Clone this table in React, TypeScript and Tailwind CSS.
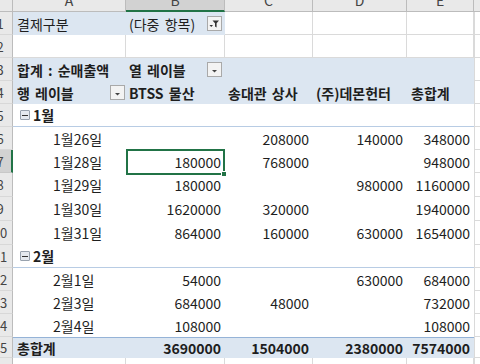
import type { ReactNode } from "react"

const W = ["w-[113px]", "w-[99px]", "w-[88px]", "w-[94px]", "w-[67px]"]
const COLS = ["A", "B", "C", "D", "E"]

function RowHead({ n, sel }: { n: number; sel?: boolean }) {
  return (
    <div
      className={
        sel
          ? "w-[13px] shrink-0 overflow-hidden border-b border-r-2 border-b-[#c8c8c8] border-r-[#217346] bg-[#d2d2d2]"
          : "w-[13px] shrink-0 overflow-hidden border-b border-r border-b-[#d8d8d8] border-r-[#bcbcbc] bg-[#e9e9e9]"
      }
    >
      <div className="-ml-[13px] flex h-full w-[26px] items-center justify-center text-[13px] text-[#444]">
        {n}
      </div>
    </div>
  )
}

function Row({ n, h, sel, children }: { n: number; h: string; sel?: boolean; children: ReactNode }) {
  return (
    <div className={`flex ${h}`}>
      <RowHead n={n} sel={sel} />
      {children}
      <div className="w-[7px] shrink-0 border-b border-l border-[#dadada] bg-white" />
    </div>
  )
}

function DropBtn({ filter }: { filter?: boolean }) {
  return (
    <span className="flex h-[15px] w-[15px] shrink-0 items-center justify-center border border-[#a9a9a9] bg-[#f3f3f3]">
      {filter ? (
        <svg width="11" height="11" viewBox="0 0 11 11">
          <path d="M0.5 7 H4 L2.25 9 Z" fill="#333" />
          <path d="M3.5 2.5 H10 L7.6 5.2 V9.5 L6 8.6 V5.2 Z" fill="#333" />
        </svg>
      ) : (
        <svg width="9" height="9" viewBox="0 0 9 9">
          <path d="M2 5 H7 L4.5 7.5 Z" fill="#444" />
        </svg>
      )}
    </span>
  )
}

function Collapse() {
  return (
    <span className="mr-[3px] flex h-[10px] w-[10px] items-center justify-center rounded-[1px] border border-[#98a2ae] bg-[#e4e9ef]">
      <span className="h-[1px] w-[6px] bg-[#333]" />
    </span>
  )
}

const grid = "shrink-0 border-b border-r border-[#dadada] bg-white"

const days = [
  { n: 6, h: "h-[23px]", label: "1월26일", v: ["", "208000", "140000", "348000"] },
  { n: 7, h: "h-[23px]", label: "1월28일", v: ["180000", "768000", "", "948000"], sel: true },
  { n: 8, h: "h-[24px]", label: "1월29일", v: ["180000", "", "980000", "1160000"] },
  { n: 9, h: "h-[24px]", label: "1월30일", v: ["1620000", "320000", "", "1940000"] },
  { n: 10, h: "h-[24px]", label: "1월31일", v: ["864000", "160000", "630000", "1654000"] },
]

const days2 = [
  { n: 12, h: "h-[23px]", label: "2월1일", v: ["54000", "", "630000", "684000"] },
  { n: 13, h: "h-[23px]", label: "2월3일", v: ["684000", "48000", "", "732000"] },
  { n: 14, h: "h-[23px]", label: "2월4일", v: ["108000", "", "", "108000"] },
]

type Day = { n: number; h: string; label: string; v: string[]; sel?: boolean }

function DayRow({ d }: { d: Day }) {
  return (
    <Row n={d.n} h={d.h} sel={d.sel}>
      <div className={`${W[0]} flex shrink-0 items-center bg-white pl-[40px]`}>{d.label}</div>
      {d.v.map((v, i) => (
        <div
          key={i}
          className={`${W[i + 1]} relative flex shrink-0 items-center justify-end bg-white pr-[4px]`}
        >
          {v}
          {d.sel && i === 0 && (
            <span className="pointer-events-none absolute -bottom-[2px] -top-[1px] left-0 right-0 z-10 border-2 border-[#217346]">
              <span className="absolute -bottom-[4px] -right-[4px] h-[6px] w-[6px] border border-white bg-[#217346]" />
            </span>
          )}
        </div>
      ))}
    </Row>
  )
}

function GroupRow({ n, label }: { n: number; label: string }) {
  return (
    <Row n={n} h="h-[23px]">
      <div className={`${W[0]} flex shrink-0 items-center border-b border-[#b8cce4] bg-white pl-[7px] font-bold`}>
        <Collapse />
        {label}
      </div>
      {[1, 2, 3, 4].map((i) => (
        <div key={i} className={`${W[i]} shrink-0 border-b border-[#b8cce4] bg-white`} />
      ))}
    </Row>
  )
}

export default function App() {
  return (
    <div className="h-[364px] w-[480px] overflow-hidden bg-white font-['Noto_Sans_CJK_KR','Liberation_Sans',sans-serif] text-[14px] leading-none text-[#1e1e1e] [word-spacing:2px]">
      {/* column headers */}
      <div className="flex h-[12px]">
        <div className="w-[13px] shrink-0 border-b border-r border-[#bcbcbc] bg-[#e9e9e9]" />
        {COLS.map((c, i) => (
          <div
            key={c}
            className={
              i === 1
                ? `${W[i]} shrink-0 overflow-hidden border-b-2 border-r border-b-[#217346] border-r-[#bcbcbc] bg-[#d2d2d2]`
                : `${W[i]} shrink-0 overflow-hidden border-b border-r border-[#bcbcbc] bg-[#e9e9e9]`
            }
          >
            <div className="-mt-[10px] flex h-[20px] items-center justify-center text-[14px] text-[#444]">{c}</div>
          </div>
        ))}
        <div className="w-[7px] shrink-0 border-b border-[#bcbcbc] bg-[#e9e9e9]" />
      </div>

      {/* 1: report filter */}
      <Row n={1} h="h-[23px]">
        <div className={`${W[0]} flex shrink-0 items-center bg-[#dce6f1] pl-[4px]`}>결제구분</div>
        <div className={`${W[1]} flex shrink-0 items-center justify-between bg-[#dce6f1] pl-[3px] pr-[3px]`}>
          <span>(다중 항목)</span>
          <DropBtn filter />
        </div>
        <div className={`${W[2]} ${grid}`} />
        <div className={`${W[3]} ${grid}`} />
        <div className={`${W[4]} ${grid}`} />
      </Row>

      {/* 2: empty */}
      <Row n={2} h="h-[23px]">
        {W.map((w) => (
          <div key={w} className={`${w} ${grid}`} />
        ))}
      </Row>

      {/* 3: value / column labels */}
      <Row n={3} h="h-[23px]">
        <div className={`${W[0]} flex shrink-0 items-center bg-[#dce6f1] pl-[4px] font-bold`}>합계 : 순매출액</div>
        <div className={`${W[1]} flex shrink-0 items-center justify-between bg-[#dce6f1] pl-[3px] pr-[3px] font-bold`}>
          <span>열 레이블</span>
          <DropBtn />
        </div>
        <div className={`${W[2]} shrink-0 bg-[#dce6f1]`} />
        <div className={`${W[3]} shrink-0 bg-[#dce6f1]`} />
        <div className={`${W[4]} shrink-0 bg-[#dce6f1]`} />
      </Row>

      {/* 4: row labels / column items */}
      <Row n={4} h="h-[23px]">
        <div className={`${W[0]} flex shrink-0 items-center justify-between bg-[#dce6f1] pl-[4px] pr-[1px] font-bold`}>
          <span>행 레이블</span>
          <DropBtn />
        </div>
        <div className={`${W[1]} flex shrink-0 items-center bg-[#dce6f1] pl-[3px] font-bold`}>BTSS 물산</div>
        <div className={`${W[2]} flex shrink-0 items-center bg-[#dce6f1] pl-[3px] font-bold`}>송대관 상사</div>
        <div className={`${W[3]} flex shrink-0 items-center bg-[#dce6f1] pl-[3px] font-bold`}>(주)데몬헌터</div>
        <div className={`${W[4]} flex shrink-0 items-center bg-[#dce6f1] pl-[4px] font-bold`}>총합계</div>
      </Row>

      <GroupRow n={5} label="1월" />
      {days.map((d) => (
        <DayRow key={d.n} d={d} />
      ))}
      <GroupRow n={11} label="2월" />
      {days2.map((d) => (
        <DayRow key={d.n} d={d} />
      ))}

      {/* 15: grand total */}
      <Row n={15} h="h-[21px]">
        <div className={`${W[0]} flex shrink-0 items-center border-t border-[#95b3d7] bg-[#dce6f1] pl-[4px] font-bold`}>총합계</div>
        {["3690000", "1504000", "2380000", "7574000"].map((v, i) => (
          <div
            key={v}
            className={`${W[i + 1]} flex shrink-0 items-center justify-end border-t border-[#95b3d7] bg-[#dce6f1] pr-[4px] font-bold`}
          >
            {v}
          </div>
        ))}
      </Row>

      {/* 16: partial */}
      <Row n={16} h="h-[23px]">
        {W.map((w) => (
          <div key={w} className={`${w} ${grid}`} />
        ))}
      </Row>
    </div>
  )
}
